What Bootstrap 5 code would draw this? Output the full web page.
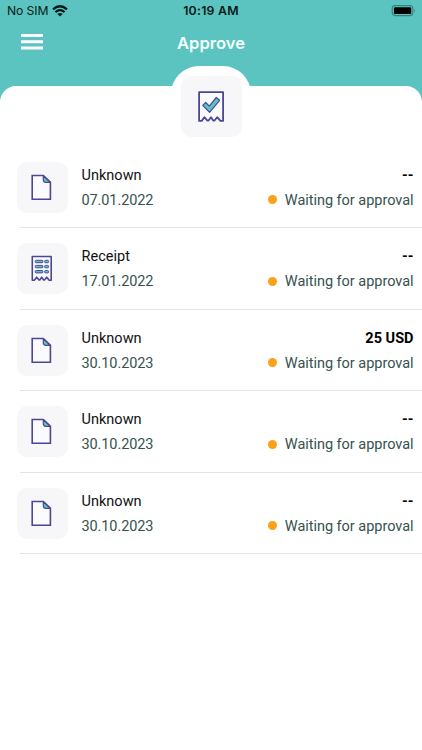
<!DOCTYPE html>
<html lang="en">
<head>
<meta charset="utf-8">
<meta name="viewport" content="width=device-width, initial-scale=1">
<title>Approve</title>
<link href="https://cdn.jsdelivr.net/npm/bootstrap@5.3.0/dist/css/bootstrap.min.css" rel="stylesheet">
<style>
body{background:#5cc4c0;font-family:Roboto,sans-serif;font-size:14.5px;line-height:20px;color:#111;height:750px;overflow:hidden}
svg{display:block}
.status{height:22px;padding:0 6px 0 7px;font:12.2px/22px Inter,sans-serif;color:#071a1a}
.status .clock{font-weight:600;font-size:12.3px;letter-spacing:.25px}
.carrier{letter-spacing:-.1px}
.titlebar{height:64px;padding:0 21px}
.titlebar h1{font:600 16.6px/42px Inter,sans-serif;color:#f4fffe}
.menu-btn{width:22px;margin-top:11.5px}
.sheet{border-radius:16px 16px 0 0;height:664px}
.hump{width:80px;height:80px;margin:-20px auto 0;border-radius:28px 28px 0 0;padding-top:10px}
.tile{background:#f7f7fa;border-radius:10px;width:51px;height:51px}
.entry .tile{padding-right:1px}
.tile-lg{width:61px;height:61px;border-radius:10px}
.entries{margin-top:.8px}
.entry{height:81.5px;padding:15px 8.5px 0 16.5px}
.entry .info{margin-left:14px;padding-top:4px}
.entry .info>div{height:24.8px}
.rule{height:1px;background:#e5e5e6;margin:-1px 0 0 20px}
.muted-green{color:#35524f}
.amount{font-weight:700;color:#000}
.dot{width:9px;height:9px;background:#faa117;margin:4.9px 7.5px 0 0}
.nm{letter-spacing:.02px}
.dt{letter-spacing:-.1px}
.st{letter-spacing:-.03px}
</style>
<script src="https://cdn.jsdelivr.net/npm/bootstrap@5.3.0/dist/js/bootstrap.bundle.min.js"></script>
</head>
<body>
<svg width="0" height="0" class="position-absolute">
  <symbol id="doc" viewBox="0 0 21 27"><path d="M1.2 1.5H12.3L19.4 8.4V25.3H1.2Z" fill="#fbfbff" stroke="#4b4794" stroke-width="1.6"/><path d="M12.3 1.7V5.8Q12.3 8.3 14.8 8.3H19.2Z" fill="#5cc4c0" stroke="#4b4794" stroke-width="1.2" stroke-linejoin="round"/></symbol>
  <symbol id="receipt" viewBox="0 0 22 27"><path d="M1.3 1.5H20.2V25.2H18.2L15.8 22.2L13.4 25H12.7L10.7 22.2L8.7 25H8L5.7 22.2L3.3 25.2H1.3Z" fill="#fbfbff" stroke="#4b4794" stroke-width="1.6" stroke-linejoin="round"/><g fill="#5cc4c0" stroke="#4b4794" stroke-width="1"><rect x="4.2" y="5.3" width="7.8" height="2.4" rx="1"/><rect x="13.6" y="5.3" width="4" height="2.4" rx="1"/><rect x="4.2" y="10.4" width="7.8" height="2.4" rx="1"/><rect x="13.6" y="10.4" width="4" height="2.4" rx="1"/><rect x="4.2" y="15.5" width="7.8" height="2.4" rx="1"/><rect x="13.6" y="15.5" width="4" height="2.4" rx="1"/></g></symbol>
</svg>
<header>
  <div class="status d-flex justify-content-between position-relative">
    <div class="d-flex align-items-center"><span class="carrier">No SIM</span>
      <svg class="ms-1" width="16" height="12" viewBox="0 0 16 12" fill="none" stroke="#071a1a" stroke-width="2.2"><path d="M1 4.3Q8-1.8 15 4.3M3.4 7.1Q8 3.1 12.6 7.1"/><path d="M5.4 8.9Q8 6.9 10.6 8.9L8 11.6Z" fill="#071a1a" stroke="none"/></svg>
    </div>
    <span class="clock position-absolute start-50 translate-middle-x">10:19 AM</span>
    <svg class="align-self-center" width="25" height="12" viewBox="0 0 25 12"><rect x="1.2" y=".6" width="20.6" height="10" rx="3" fill="none" stroke="#397d7b" stroke-width="1.1"/><rect x="2.9" y="2.2" width="17.3" height="6.9" rx="1.2" fill="#000"/><path d="M23.2 3.9Q25 5.7 23.2 7.5Z" fill="#397d7b"/></svg>
  </div>
  <div class="titlebar position-relative">
    <svg class="float-start menu-btn" width="22" height="16" viewBox="0 0 22 16" fill="#fff"><path d="M0 0H22V3H0ZM0 6.3H22V9.3H0ZM0 12.5H22V15.5H0Z"/></svg>
    <h1 class="m-0 position-absolute start-50 translate-middle-x">Approve</h1>
  </div>
</header>
<main class="sheet bg-white">
  <div class="d-flex"><div class="hump bg-white"><div class="tile tile-lg mx-auto d-flex align-items-center justify-content-center">
    <svg width="27" height="32" viewBox="0 0 27 32"><path d="M1.1 1.1H25.1V29.9H22.5L19.2 26.2L16.5 29.5H15.2L13 26.2L10.5 29.5H9.2L6.4 26.2L3.7 29.9H1.1Z" fill="#fbfbff" stroke="#4b4794" stroke-width="1.8" stroke-linejoin="round"/><path d="M4.7 14.4L7.7 11.5L11.3 15.2L18.3 6.5L21.6 9.3L11.6 21.3Z" fill="#5cc4c0" stroke="#4b4794" stroke-width="1.2" stroke-linejoin="round"/></svg>
  </div></div></div>
  <div class="entries">
    <div class="entry d-flex"><div class="tile d-flex align-items-center justify-content-center"><svg width="21" height="27"><use href="#doc"/></svg></div><div class="info flex-grow-1"><div class="d-flex justify-content-between"><span class="nm">Unknown</span><span class="amount">--</span></div><div class="d-flex justify-content-between muted-green"><span class="dt">07.01.2022</span><span class="d-flex align-items-start"><i class="dot rounded-circle"></i><span class="st">Waiting for approval</span></span></div></div></div><div class="rule"></div>
    <div class="entry d-flex"><div class="tile d-flex align-items-center justify-content-center"><svg width="22" height="27"><use href="#receipt"/></svg></div><div class="info flex-grow-1"><div class="d-flex justify-content-between"><span class="nm">Receipt</span><span class="amount">--</span></div><div class="d-flex justify-content-between muted-green"><span class="dt">17.01.2022</span><span class="d-flex align-items-start"><i class="dot rounded-circle"></i><span class="st">Waiting for approval</span></span></div></div></div><div class="rule"></div>
    <div class="entry d-flex"><div class="tile d-flex align-items-center justify-content-center"><svg width="21" height="27"><use href="#doc"/></svg></div><div class="info flex-grow-1"><div class="d-flex justify-content-between"><span class="nm">Unknown</span><span class="amount">25 USD</span></div><div class="d-flex justify-content-between muted-green"><span class="dt">30.10.2023</span><span class="d-flex align-items-start"><i class="dot rounded-circle"></i><span class="st">Waiting for approval</span></span></div></div></div><div class="rule"></div>
    <div class="entry d-flex"><div class="tile d-flex align-items-center justify-content-center"><svg width="21" height="27"><use href="#doc"/></svg></div><div class="info flex-grow-1"><div class="d-flex justify-content-between"><span class="nm">Unknown</span><span class="amount">--</span></div><div class="d-flex justify-content-between muted-green"><span class="dt">30.10.2023</span><span class="d-flex align-items-start"><i class="dot rounded-circle"></i><span class="st">Waiting for approval</span></span></div></div></div><div class="rule"></div>
    <div class="entry d-flex"><div class="tile d-flex align-items-center justify-content-center"><svg width="21" height="27"><use href="#doc"/></svg></div><div class="info flex-grow-1"><div class="d-flex justify-content-between"><span class="nm">Unknown</span><span class="amount">--</span></div><div class="d-flex justify-content-between muted-green"><span class="dt">30.10.2023</span><span class="d-flex align-items-start"><i class="dot rounded-circle"></i><span class="st">Waiting for approval</span></span></div></div></div><div class="rule"></div>
  </div>
</main>
</body>
</html>
